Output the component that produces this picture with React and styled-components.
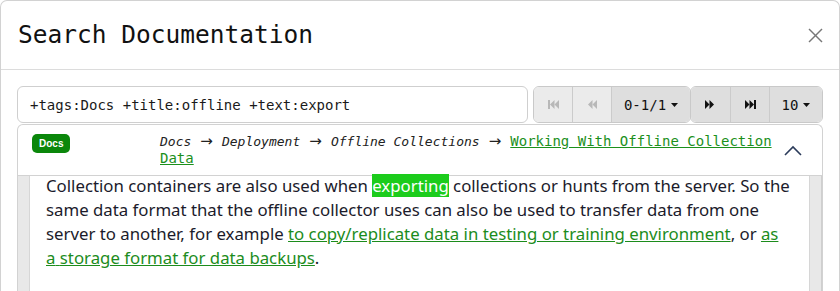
import React from 'react';
import styled, { createGlobalStyle } from 'styled-components';

const GlobalStyle = createGlobalStyle`
    html, body {
        margin: 0;
        padding: 0;
        background: #ffffff;
        overflow: hidden;
    }
`;

const mono = `"DejaVu Sans Mono", "Liberation Mono", monospace`;

const Modal = styled.div`
    box-sizing: border-box;
    width: 840px;
    min-height: 320px;
    border: 1px solid #d2d2d2;
    border-bottom: none;
    border-radius: 7px 7px 0 0;
    background: #fff;
`;

const Header = styled.div`
    display: flex;
    align-items: center;
    justify-content: space-between;
    padding: 16px 16px 16px 17px;
    border-bottom: 1px solid #dcdcdc;
`;

const Title = styled.h1`
    margin: 0;
    font-family: ${mono};
    font-size: 24.5px;
    font-weight: normal;
    line-height: 36px;
    color: #111;
`;

const Close = styled.button`
    display: flex;
    align-items: center;
    justify-content: center;
    width: 16px;
    height: 16px;
    padding: 0;
    border: none;
    background: none;
    color: #777;
`;

const Body = styled.div`
    padding: 16px 16px 0 16px;
`;

const SearchRow = styled.div`
    display: flex;
    align-items: stretch;
    gap: 5px;
`;

const SearchInput = styled.div`
    box-sizing: border-box;
    flex: 1;
    height: 37px;
    display: flex;
    align-items: center;
    padding: 0 12px;
    border: 1px solid #cfcfcf;
    border-radius: 6px;
    font-family: ${mono};
    font-size: 14px;
    color: #1a1a1a;
`;

const Pager = styled.div`
    display: flex;
`;

const Group = styled.div`
    display: flex;
    border: 1px solid #c9c9c9;
    border-radius: 6px;
    overflow: hidden;
    & + & {
        margin-left: -1px;
    }
`;

const PageButton = styled.div`
    box-sizing: border-box;
    width: ${p => p.$w}px;
    height: 35px;
    display: flex;
    align-items: center;
    justify-content: center;
    gap: 5px;
    background: ${p => (p.$disabled ? '#ebebeb' : '#dedede')};
    color: ${p => (p.$disabled ? '#b8b8b8' : '#111')};
    font-family: ${mono};
    font-size: 14px;
    & + & {
        border-left: 1px solid #cbcbcb;
    }
`;

const Card = styled.div`
    margin-top: 1px;
    border: 1px solid #d2d2d2;
    border-bottom: none;
    border-radius: 6px 6px 0 0;
`;

const CardHeader = styled.div`
    display: grid;
    grid-template-columns: 128px 1fr 40px;
    padding: 8px 0 8px 14px;
    border-bottom: 1px solid #d2d2d2;
`;

const Badge = styled.span`
    display: inline-block;
    margin-top: 1px;
    padding: 0 7px;
    height: 19px;
    line-height: 19px;
    border-radius: 5px;
    background: #0b870b;
    color: #fff;
    font-family: "Liberation Sans", Arial, sans-serif;
    font-weight: bold;
    font-size: 10px;
`;

const Crumbs = styled.div`
    font-family: ${mono};
    font-size: 13px;
    line-height: 17px;
    color: #222;
`;

const Crumb = styled.span`
    font-style: italic;
`;

const Arrow = styled.span`
    display: inline-block;
    width: 15px;
    text-align: center;
    font-family: "DejaVu Sans", sans-serif;
    font-size: 15px;
    font-style: normal;
`;

const CrumbLink = styled.a`
    color: #1c901c;
    font-size: 14px;
    text-decoration: underline;
`;

const Toggle = styled.div`
    align-self: center;
    display: flex;
    justify-content: flex-start;
    padding-left: 2px;
    color: #2b3b5a;
`;

const ContentFrame = styled.div`
    display: flex;
    min-height: 200px;
    padding: 0 11px;
    background: #e8e8e8;
    border-right: 1px solid #cfcfcf;
`;

const Content = styled.div`
    flex: 1;
    background: #fff;
    border-left: 1px solid #d6d6d6;
    border-right: 1px solid #d6d6d6;
    padding: 0 14px 0 16px;
`;

const Paragraph = styled.p`
    max-width: 748px;
    margin: -2px 0 0 0;
    font-family: "Noto Sans", "Open Sans", sans-serif;
    font-size: 16.8px;
    line-height: 24px;
    color: #1b1b2b;
`;

const Hit = styled.span`
    background: #1ccc1c;
    color: #fff;
`;

const TextLink = styled.a`
    color: #1c8c1c;
    text-decoration: underline;
`;

const Icon = ({ kind }) => {
    const shapes = {
        first: <><rect x="0" y="0" width="2" height="9" /><polygon points="6.5,0 6.5,9 2,4.5" /><polygon points="11,0 11,9 6.5,4.5" /></>,
        prev: <><polygon points="5.5,0 5.5,9 1,4.5" /><polygon points="10,0 10,9 5.5,4.5" /></>,
        next: <><polygon points="0,0 0,9 4.5,4.5" /><polygon points="4.5,0 4.5,9 9,4.5" /></>,
        last: <><polygon points="0,0 0,9 4.5,4.5" /><polygon points="4.5,0 4.5,9 9,4.5" /><rect x="9" y="0" width="2" height="9" /></>,
    };
    return <svg width="11" height="9" viewBox="0 0 11 9" fill="currentColor">{shapes[kind]}</svg>;
};

const Caret = () => (
    <svg width="7" height="4" viewBox="0 0 7 4" fill="currentColor">
        <polygon points="0,0 7,0 3.5,4" />
    </svg>
);

const App = () => {
    return <>
        <GlobalStyle />
        <Modal>
            <Header>
                <Title>Search Documentation</Title>
                <Close aria-label="Close">
                    <svg width="15" height="15" viewBox="0 0 15 15" stroke="currentColor" strokeWidth="1.4">
                        <line x1="1" y1="1" x2="14" y2="14" />
                        <line x1="14" y1="1" x2="1" y2="14" />
                    </svg>
                </Close>
            </Header>
            <Body>
                <SearchRow>
                    <SearchInput>+tags:Docs +title:offline +text:export</SearchInput>
                    <Pager>
                        <Group>
                            <PageButton $w={38} $disabled><Icon kind="first" /></PageButton>
                            <PageButton $w={39} $disabled><Icon kind="prev" /></PageButton>
                            <PageButton $w={79}>0-1/1<Caret /></PageButton>
                        </Group>
                        <Group>
                            <PageButton $w={39}><Icon kind="next" /></PageButton>
                            <PageButton $w={39}><Icon kind="last" /></PageButton>
                            <PageButton $w={53}>10<Caret /></PageButton>
                        </Group>
                    </Pager>
                </SearchRow>
                <Card>
                    <CardHeader>
                        <div><Badge>Docs</Badge></div>
                        <Crumbs>
                            <Crumb>Docs</Crumb> <Arrow>→</Arrow> <Crumb>Deployment</Crumb> <Arrow>→</Arrow> <Crumb>Offline Collections</Crumb> <Arrow>→</Arrow> <CrumbLink>Working With Offline Collection Data</CrumbLink>
                        </Crumbs>
                        <Toggle>
                            <svg width="18" height="11" viewBox="0 0 18 11" fill="none" stroke="currentColor" strokeWidth="1.6">
                                <polyline points="1,10 9,2 17,10" />
                            </svg>
                        </Toggle>
                    </CardHeader>
                    <ContentFrame>
                        <Content>
                            <Paragraph>
                                Collection containers are also used when <Hit>exporting</Hit> collections or hunts from the server. So the same data format that the offline collector uses can also be used to transfer data from one server to another, for example <TextLink>to copy/replicate data in testing or training environment</TextLink>, or <TextLink>as a{'\u00A0'}storage format for data backups</TextLink>.
                            </Paragraph>
                        </Content>
                    </ContentFrame>
                </Card>
            </Body>
        </Modal>
    </>;
};

export default App;
